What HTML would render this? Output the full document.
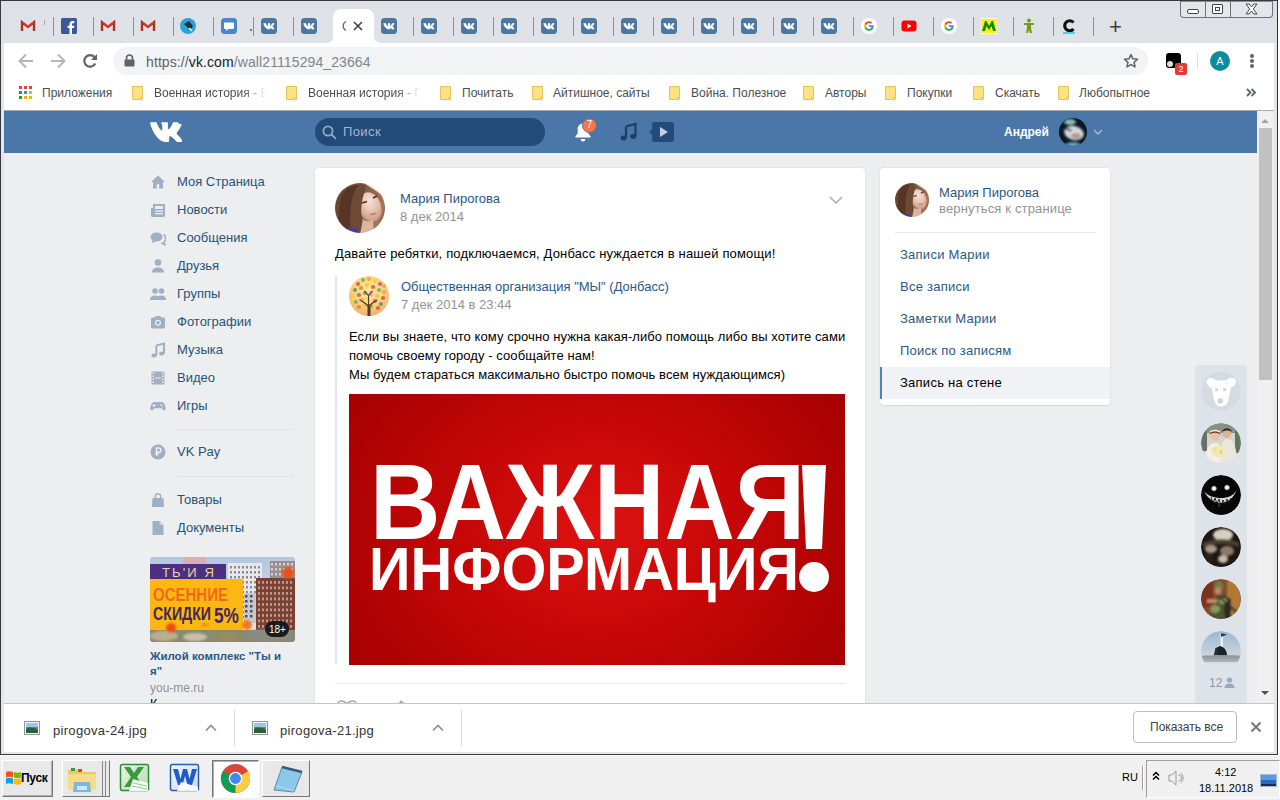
<!DOCTYPE html>
<html><head><meta charset="utf-8">
<style>
*{margin:0;padding:0;box-sizing:border-box}
html,body{width:1280px;height:800px;overflow:hidden;background:#fff;font-family:"Liberation Sans",sans-serif;-webkit-font-smoothing:antialiased}
.a{position:absolute}
#win{position:absolute;left:0;top:0;width:1278px;height:755px;background:#dee1e6;border:1px solid #333a40;border-right:1px solid #2e3338;}
.tsep{position:absolute;top:17px;width:1px;height:19px;background:#8d9196}
.fav{position:absolute;top:18px;width:16px;height:16px}
.vk{background:#4a76a8;border-radius:3px;color:#fff;font:bold 8px/16px "Liberation Sans",sans-serif;text-align:center;letter-spacing:-0.5px}
.bm{position:absolute;top:85px;font-size:12px;color:#4a4e53;line-height:16px}
.fold{position:absolute;top:86px;width:11px;height:14px;background:#fcd972;border:1px solid #e9c04f;border-radius:1px}
.menu .it{position:absolute;left:177px;font-size:13px;color:#285473;line-height:16px}
.menu .ic{position:absolute;left:150px;width:16px;height:16px}
.card{position:absolute;background:#fff;border-radius:4px;box-shadow:0 1px 0 0 #d7d8db,0 0 0 1px #e3e4e8}
.lnk{color:#2a5885}
.rm{position:absolute;left:900px;font-size:13px;color:#2a5885;line-height:16px;letter-spacing:0.25px}
.fr{position:absolute;left:1201px;width:40px;height:40px;border-radius:50%}
</style></head><body>
<div id="win"></div>
<!-- tab bar -->
<div class="a" style="left:1px;top:1px;width:1276px;height:42px;background:#dee1e6"></div>
<!-- window buttons -->
<div class="a" style="left:1180px;top:1px;width:93px;height:17px;border:1px solid #6d7278;border-top:1px solid #8a8e94;border-radius:0 0 4px 4px;background:#e3e6ea"></div>
<div class="a" style="left:1205px;top:1px;width:1px;height:16px;background:#6d7278"></div>
<div class="a" style="left:1230px;top:1px;width:1px;height:16px;background:#6d7278"></div>
<div class="a" style="left:1187px;top:9px;width:12px;height:5px;border:1px solid #444;border-radius:2px;background:#fff"></div>
<div class="a" style="left:1212px;top:4px;width:11px;height:10px;border:1px solid #444;border-radius:1px;background:#fff"><div class="a" style="left:2px;top:2px;width:5px;height:4px;border:1px solid #444"></div></div>
<svg class="a" style="left:1245px;top:3px" width="13" height="12" viewBox="0 0 13 12"><path d="M1 1h3.2l2.3 3 2.3-3H12L8.3 6 12 11H8.8L6.5 8 4.2 11H1l3.7-5z" fill="#fff" stroke="#444" stroke-width="1" stroke-linejoin="round"/></svg>
<div class="a" style="left:1274px;top:1px;width:3px;height:42px;background:#dee1e6"></div>
<!-- active tab -->
<svg class="a" style="left:325px;top:9px" width="57" height="34" viewBox="0 0 57 34"><path d="M0 34c5 0 8-2 8-7V8a8 8 0 0 1 8-8h25a8 8 0 0 1 8 8v19c0 5 3 7 8 7z" fill="#fff"/></svg>
<svg class="a" style="left:341px;top:21px" width="6" height="10" viewBox="0 0 6 10"><path d="M5 0.5A5 5 0 0 0 5 9.5" stroke="#5f6368" stroke-width="1.2" fill="none"/></svg>
<svg class="a" style="left:353px;top:21px" width="10" height="10" viewBox="0 0 10 10"><path d="M1 1l8 8M9 1l-8 8" stroke="#3c4043" stroke-width="1.6"/></svg>

<div class="tsep" style="left:53px"></div>
<div class="tsep" style="left:93px"></div>
<div class="tsep" style="left:133px"></div>
<div class="tsep" style="left:173px"></div>
<div class="tsep" style="left:213px"></div>
<div class="tsep" style="left:253px"></div>
<div class="tsep" style="left:293px"></div>
<div class="tsep" style="left:413px"></div>
<div class="tsep" style="left:453px"></div>
<div class="tsep" style="left:493px"></div>
<div class="tsep" style="left:533px"></div>
<div class="tsep" style="left:573px"></div>
<div class="tsep" style="left:613px"></div>
<div class="tsep" style="left:653px"></div>
<div class="tsep" style="left:693px"></div>
<div class="tsep" style="left:733px"></div>
<div class="tsep" style="left:773px"></div>
<div class="tsep" style="left:813px"></div>
<div class="tsep" style="left:853px"></div>
<div class="tsep" style="left:893px"></div>
<div class="tsep" style="left:933px"></div>
<div class="tsep" style="left:973px"></div>
<div class="tsep" style="left:1013px"></div>
<div class="tsep" style="left:1053px"></div>
<div class="tsep" style="left:1093px"></div>
<svg class="fav" style="left:20px" viewBox="0 0 16 16"><path d="M2 13V4.2L8 9l6-4.8V13" fill="none" stroke="#b23121" stroke-width="2.4" stroke-linejoin="miter"/><path d="M3 4.5L8 8.6l5-4.1" fill="none" stroke="#d44638" stroke-width="1.5"/></svg>
<svg class="fav" style="left:61px" viewBox="0 0 16 16"><rect width="16" height="16" rx="1.5" fill="#3b5998"/><path d="M11 16V10h2l.3-2.3H11V6.3c0-.7.2-1.1 1.1-1.1h1.2V3.1c-.2 0-1-.1-1.8-.1-1.8 0-3 1.1-3 3.1v1.6H6.6V10h1.9v6z" fill="#fff"/></svg>
<svg class="fav" style="left:100px" viewBox="0 0 16 16"><path d="M2 13V4.2L8 9l6-4.8V13" fill="none" stroke="#b23121" stroke-width="2.4" stroke-linejoin="miter"/><path d="M3 4.5L8 8.6l5-4.1" fill="none" stroke="#d44638" stroke-width="1.5"/></svg>
<svg class="fav" style="left:140px" viewBox="0 0 16 16"><path d="M2 13V4.2L8 9l6-4.8V13" fill="none" stroke="#b23121" stroke-width="2.4" stroke-linejoin="miter"/><path d="M3 4.5L8 8.6l5-4.1" fill="none" stroke="#d44638" stroke-width="1.5"/></svg>
<svg class="fav" style="left:180px" viewBox="0 0 16 16"><circle cx="8" cy="8" r="8" fill="#29a3d8"/><path d="M4 6l5-3 4 5-3 4z" fill="#17323f"/><path d="M9 10l3 3" stroke="#fff" stroke-width="1.5"/></svg>
<svg class="fav" style="left:221px" viewBox="0 0 16 16"><rect width="16" height="16" rx="3.5" fill="#4d86c6"/><path d="M4 4.5h8a1 1 0 0 1 1 1v4.5a1 1 0 0 1-1 1H7.5L5 13v-2H4a1 1 0 0 1-1-1V5.5a1 1 0 0 1 1-1z" fill="#fff"/></svg>
<svg class="fav" style="left:261px" viewBox="0 0 16 16"><rect width="16" height="16" rx="3.5" fill="#4d76a1"/><path d="M2.6 5.2h2c.2 0 .3.1.4.3.5 1.3 1.2 2.6 1.9 3V5.5c0-.2.1-.3.3-.3h1.6c.2 0 .3.1.3.3v2.4c.6-.1 1.5-1.3 1.9-2.4.1-.2.2-.3.4-.3h1.8c.3 0 .3.2.2.5-.4 1-1.5 2.2-1.9 2.6 0 .1 0 .2.1.3.6.6 1.5 1.5 1.9 2.3.1.3 0 .4-.3.4h-1.8c-.2 0-.3-.1-.5-.3-.4-.6-1-1.2-1.6-1.3v1.3c0 .2-.1.3-.3.3H8c-2.5-.2-4.6-2.4-5.6-5.4-.1-.3 0-.3.2-.3z" fill="#fff"/></svg>
<svg class="fav" style="left:301px" viewBox="0 0 16 16"><rect width="16" height="16" rx="3.5" fill="#4d76a1"/><path d="M2.6 5.2h2c.2 0 .3.1.4.3.5 1.3 1.2 2.6 1.9 3V5.5c0-.2.1-.3.3-.3h1.6c.2 0 .3.1.3.3v2.4c.6-.1 1.5-1.3 1.9-2.4.1-.2.2-.3.4-.3h1.8c.3 0 .3.2.2.5-.4 1-1.5 2.2-1.9 2.6 0 .1 0 .2.1.3.6.6 1.5 1.5 1.9 2.3.1.3 0 .4-.3.4h-1.8c-.2 0-.3-.1-.5-.3-.4-.6-1-1.2-1.6-1.3v1.3c0 .2-.1.3-.3.3H8c-2.5-.2-4.6-2.4-5.6-5.4-.1-.3 0-.3.2-.3z" fill="#fff"/></svg>
<svg class="fav" style="left:381px" viewBox="0 0 16 16"><rect width="16" height="16" rx="3.5" fill="#4d76a1"/><path d="M2.6 5.2h2c.2 0 .3.1.4.3.5 1.3 1.2 2.6 1.9 3V5.5c0-.2.1-.3.3-.3h1.6c.2 0 .3.1.3.3v2.4c.6-.1 1.5-1.3 1.9-2.4.1-.2.2-.3.4-.3h1.8c.3 0 .3.2.2.5-.4 1-1.5 2.2-1.9 2.6 0 .1 0 .2.1.3.6.6 1.5 1.5 1.9 2.3.1.3 0 .4-.3.4h-1.8c-.2 0-.3-.1-.5-.3-.4-.6-1-1.2-1.6-1.3v1.3c0 .2-.1.3-.3.3H8c-2.5-.2-4.6-2.4-5.6-5.4-.1-.3 0-.3.2-.3z" fill="#fff"/></svg>
<svg class="fav" style="left:421px" viewBox="0 0 16 16"><rect width="16" height="16" rx="3.5" fill="#4d76a1"/><path d="M2.6 5.2h2c.2 0 .3.1.4.3.5 1.3 1.2 2.6 1.9 3V5.5c0-.2.1-.3.3-.3h1.6c.2 0 .3.1.3.3v2.4c.6-.1 1.5-1.3 1.9-2.4.1-.2.2-.3.4-.3h1.8c.3 0 .3.2.2.5-.4 1-1.5 2.2-1.9 2.6 0 .1 0 .2.1.3.6.6 1.5 1.5 1.9 2.3.1.3 0 .4-.3.4h-1.8c-.2 0-.3-.1-.5-.3-.4-.6-1-1.2-1.6-1.3v1.3c0 .2-.1.3-.3.3H8c-2.5-.2-4.6-2.4-5.6-5.4-.1-.3 0-.3.2-.3z" fill="#fff"/></svg>
<svg class="fav" style="left:461px" viewBox="0 0 16 16"><rect width="16" height="16" rx="3.5" fill="#4d76a1"/><path d="M2.6 5.2h2c.2 0 .3.1.4.3.5 1.3 1.2 2.6 1.9 3V5.5c0-.2.1-.3.3-.3h1.6c.2 0 .3.1.3.3v2.4c.6-.1 1.5-1.3 1.9-2.4.1-.2.2-.3.4-.3h1.8c.3 0 .3.2.2.5-.4 1-1.5 2.2-1.9 2.6 0 .1 0 .2.1.3.6.6 1.5 1.5 1.9 2.3.1.3 0 .4-.3.4h-1.8c-.2 0-.3-.1-.5-.3-.4-.6-1-1.2-1.6-1.3v1.3c0 .2-.1.3-.3.3H8c-2.5-.2-4.6-2.4-5.6-5.4-.1-.3 0-.3.2-.3z" fill="#fff"/></svg>
<svg class="fav" style="left:501px" viewBox="0 0 16 16"><rect width="16" height="16" rx="3.5" fill="#4d76a1"/><path d="M2.6 5.2h2c.2 0 .3.1.4.3.5 1.3 1.2 2.6 1.9 3V5.5c0-.2.1-.3.3-.3h1.6c.2 0 .3.1.3.3v2.4c.6-.1 1.5-1.3 1.9-2.4.1-.2.2-.3.4-.3h1.8c.3 0 .3.2.2.5-.4 1-1.5 2.2-1.9 2.6 0 .1 0 .2.1.3.6.6 1.5 1.5 1.9 2.3.1.3 0 .4-.3.4h-1.8c-.2 0-.3-.1-.5-.3-.4-.6-1-1.2-1.6-1.3v1.3c0 .2-.1.3-.3.3H8c-2.5-.2-4.6-2.4-5.6-5.4-.1-.3 0-.3.2-.3z" fill="#fff"/></svg>
<svg class="fav" style="left:541px" viewBox="0 0 16 16"><rect width="16" height="16" rx="3.5" fill="#4d76a1"/><path d="M2.6 5.2h2c.2 0 .3.1.4.3.5 1.3 1.2 2.6 1.9 3V5.5c0-.2.1-.3.3-.3h1.6c.2 0 .3.1.3.3v2.4c.6-.1 1.5-1.3 1.9-2.4.1-.2.2-.3.4-.3h1.8c.3 0 .3.2.2.5-.4 1-1.5 2.2-1.9 2.6 0 .1 0 .2.1.3.6.6 1.5 1.5 1.9 2.3.1.3 0 .4-.3.4h-1.8c-.2 0-.3-.1-.5-.3-.4-.6-1-1.2-1.6-1.3v1.3c0 .2-.1.3-.3.3H8c-2.5-.2-4.6-2.4-5.6-5.4-.1-.3 0-.3.2-.3z" fill="#fff"/></svg>
<svg class="fav" style="left:581px" viewBox="0 0 16 16"><rect width="16" height="16" rx="3.5" fill="#4d76a1"/><path d="M2.6 5.2h2c.2 0 .3.1.4.3.5 1.3 1.2 2.6 1.9 3V5.5c0-.2.1-.3.3-.3h1.6c.2 0 .3.1.3.3v2.4c.6-.1 1.5-1.3 1.9-2.4.1-.2.2-.3.4-.3h1.8c.3 0 .3.2.2.5-.4 1-1.5 2.2-1.9 2.6 0 .1 0 .2.1.3.6.6 1.5 1.5 1.9 2.3.1.3 0 .4-.3.4h-1.8c-.2 0-.3-.1-.5-.3-.4-.6-1-1.2-1.6-1.3v1.3c0 .2-.1.3-.3.3H8c-2.5-.2-4.6-2.4-5.6-5.4-.1-.3 0-.3.2-.3z" fill="#fff"/></svg>
<svg class="fav" style="left:621px" viewBox="0 0 16 16"><rect width="16" height="16" rx="3.5" fill="#4d76a1"/><path d="M2.6 5.2h2c.2 0 .3.1.4.3.5 1.3 1.2 2.6 1.9 3V5.5c0-.2.1-.3.3-.3h1.6c.2 0 .3.1.3.3v2.4c.6-.1 1.5-1.3 1.9-2.4.1-.2.2-.3.4-.3h1.8c.3 0 .3.2.2.5-.4 1-1.5 2.2-1.9 2.6 0 .1 0 .2.1.3.6.6 1.5 1.5 1.9 2.3.1.3 0 .4-.3.4h-1.8c-.2 0-.3-.1-.5-.3-.4-.6-1-1.2-1.6-1.3v1.3c0 .2-.1.3-.3.3H8c-2.5-.2-4.6-2.4-5.6-5.4-.1-.3 0-.3.2-.3z" fill="#fff"/></svg>
<svg class="fav" style="left:661px" viewBox="0 0 16 16"><rect width="16" height="16" rx="3.5" fill="#4d76a1"/><path d="M2.6 5.2h2c.2 0 .3.1.4.3.5 1.3 1.2 2.6 1.9 3V5.5c0-.2.1-.3.3-.3h1.6c.2 0 .3.1.3.3v2.4c.6-.1 1.5-1.3 1.9-2.4.1-.2.2-.3.4-.3h1.8c.3 0 .3.2.2.5-.4 1-1.5 2.2-1.9 2.6 0 .1 0 .2.1.3.6.6 1.5 1.5 1.9 2.3.1.3 0 .4-.3.4h-1.8c-.2 0-.3-.1-.5-.3-.4-.6-1-1.2-1.6-1.3v1.3c0 .2-.1.3-.3.3H8c-2.5-.2-4.6-2.4-5.6-5.4-.1-.3 0-.3.2-.3z" fill="#fff"/></svg>
<svg class="fav" style="left:701px" viewBox="0 0 16 16"><rect width="16" height="16" rx="3.5" fill="#4d76a1"/><path d="M2.6 5.2h2c.2 0 .3.1.4.3.5 1.3 1.2 2.6 1.9 3V5.5c0-.2.1-.3.3-.3h1.6c.2 0 .3.1.3.3v2.4c.6-.1 1.5-1.3 1.9-2.4.1-.2.2-.3.4-.3h1.8c.3 0 .3.2.2.5-.4 1-1.5 2.2-1.9 2.6 0 .1 0 .2.1.3.6.6 1.5 1.5 1.9 2.3.1.3 0 .4-.3.4h-1.8c-.2 0-.3-.1-.5-.3-.4-.6-1-1.2-1.6-1.3v1.3c0 .2-.1.3-.3.3H8c-2.5-.2-4.6-2.4-5.6-5.4-.1-.3 0-.3.2-.3z" fill="#fff"/></svg>
<svg class="fav" style="left:741px" viewBox="0 0 16 16"><rect width="16" height="16" rx="3.5" fill="#4d76a1"/><path d="M2.6 5.2h2c.2 0 .3.1.4.3.5 1.3 1.2 2.6 1.9 3V5.5c0-.2.1-.3.3-.3h1.6c.2 0 .3.1.3.3v2.4c.6-.1 1.5-1.3 1.9-2.4.1-.2.2-.3.4-.3h1.8c.3 0 .3.2.2.5-.4 1-1.5 2.2-1.9 2.6 0 .1 0 .2.1.3.6.6 1.5 1.5 1.9 2.3.1.3 0 .4-.3.4h-1.8c-.2 0-.3-.1-.5-.3-.4-.6-1-1.2-1.6-1.3v1.3c0 .2-.1.3-.3.3H8c-2.5-.2-4.6-2.4-5.6-5.4-.1-.3 0-.3.2-.3z" fill="#fff"/></svg>
<svg class="fav" style="left:781px" viewBox="0 0 16 16"><rect width="16" height="16" rx="3.5" fill="#4d76a1"/><path d="M2.6 5.2h2c.2 0 .3.1.4.3.5 1.3 1.2 2.6 1.9 3V5.5c0-.2.1-.3.3-.3h1.6c.2 0 .3.1.3.3v2.4c.6-.1 1.5-1.3 1.9-2.4.1-.2.2-.3.4-.3h1.8c.3 0 .3.2.2.5-.4 1-1.5 2.2-1.9 2.6 0 .1 0 .2.1.3.6.6 1.5 1.5 1.9 2.3.1.3 0 .4-.3.4h-1.8c-.2 0-.3-.1-.5-.3-.4-.6-1-1.2-1.6-1.3v1.3c0 .2-.1.3-.3.3H8c-2.5-.2-4.6-2.4-5.6-5.4-.1-.3 0-.3.2-.3z" fill="#fff"/></svg>
<svg class="fav" style="left:821px" viewBox="0 0 16 16"><rect width="16" height="16" rx="3.5" fill="#4d76a1"/><path d="M2.6 5.2h2c.2 0 .3.1.4.3.5 1.3 1.2 2.6 1.9 3V5.5c0-.2.1-.3.3-.3h1.6c.2 0 .3.1.3.3v2.4c.6-.1 1.5-1.3 1.9-2.4.1-.2.2-.3.4-.3h1.8c.3 0 .3.2.2.5-.4 1-1.5 2.2-1.9 2.6 0 .1 0 .2.1.3.6.6 1.5 1.5 1.9 2.3.1.3 0 .4-.3.4h-1.8c-.2 0-.3-.1-.5-.3-.4-.6-1-1.2-1.6-1.3v1.3c0 .2-.1.3-.3.3H8c-2.5-.2-4.6-2.4-5.6-5.4-.1-.3 0-.3.2-.3z" fill="#fff"/></svg>
<svg class="fav" style="left:861px" viewBox="0 0 16 16"><circle cx="8" cy="8" r="8" fill="#fff"/><path d="M12.6 8.2c0-.4 0-.7-.1-1H8v1.9h2.6c-.1.6-.5 1.1-1 1.5v1.2h1.6c.9-.9 1.4-2.1 1.4-3.6z" fill="#4285f4"/><path d="M8 12.8c1.3 0 2.4-.4 3.2-1.2l-1.6-1.2c-.4.3-1 .5-1.6.5-1.2 0-2.3-.8-2.6-2H3.7v1.3c.8 1.6 2.5 2.6 4.3 2.6z" fill="#34a853"/><path d="M5.4 8.9c-.2-.6-.2-1.2 0-1.8V5.8H3.7c-.7 1.4-.7 3 0 4.4z" fill="#fbbc05"/><path d="M8 5.1c.7 0 1.3.2 1.8.7l1.4-1.4C10.3 3.6 9.2 3.2 8 3.2c-1.8 0-3.5 1-4.3 2.6l1.7 1.3c.3-1.2 1.4-2 2.6-2z" fill="#ea4335"/></svg>
<svg class="fav" style="left:901px" viewBox="0 0 16 16"><rect x="0.5" y="2.5" width="15" height="11" rx="3" fill="#f00"/><path d="M6.5 5.5v5l4-2.5z" fill="#fff"/></svg>
<svg class="fav" style="left:941px" viewBox="0 0 16 16"><circle cx="8" cy="8" r="8" fill="#fff"/><path d="M12.6 8.2c0-.4 0-.7-.1-1H8v1.9h2.6c-.1.6-.5 1.1-1 1.5v1.2h1.6c.9-.9 1.4-2.1 1.4-3.6z" fill="#4285f4"/><path d="M8 12.8c1.3 0 2.4-.4 3.2-1.2l-1.6-1.2c-.4.3-1 .5-1.6.5-1.2 0-2.3-.8-2.6-2H3.7v1.3c.8 1.6 2.5 2.6 4.3 2.6z" fill="#34a853"/><path d="M5.4 8.9c-.2-.6-.2-1.2 0-1.8V5.8H3.7c-.7 1.4-.7 3 0 4.4z" fill="#fbbc05"/><path d="M8 5.1c.7 0 1.3.2 1.8.7l1.4-1.4C10.3 3.6 9.2 3.2 8 3.2c-1.8 0-3.5 1-4.3 2.6l1.7 1.3c.3-1.2 1.4-2 2.6-2z" fill="#ea4335"/></svg>
<svg class="fav" style="left:981px" viewBox="0 0 16 16"><rect width="16" height="16" fill="#fff"/><rect x="0.5" y="1" width="15" height="14" fill="#fff200"/><path d="M1 13L4 3h1.5L8 8l2.5-5H12l3 10h-3l-1.5-5L8 12 5.5 8 4 13z" fill="#0a8a2e"/></svg>
<svg class="fav" style="left:1021px" viewBox="0 0 16 16"><circle cx="8" cy="2.5" r="2" fill="#7a9a1f"/><path d="M3 5h10v2H10v3l1 5H9l-1-3-1 3H5l1-5V7H3z" fill="#7a9a1f"/></svg>
<svg class="fav" style="left:1061px" viewBox="0 0 16 16"><path d="M12.5 4.5A5 5 0 1 0 12.5 11" fill="none" stroke="#111" stroke-width="3.2"/><rect x="2" y="14" width="12" height="2" fill="#4dd0e1"/></svg>
<div class="a" style="left:1109px;top:19px;font:300 22px/16px 'Liberation Sans';color:#3c4043">+</div>
<div class="a" style="left:44px;top:20px;width:1px;height:5px;background:#aaa"></div>
<div class="a" style="left:250px;top:29px;width:2px;height:2px;background:#777"></div>

<!-- toolbar -->
<div class="a" style="left:1px;top:43px;width:1276px;height:67px;background:#fff"></div>
<div class="a" style="left:113px;top:47px;width:1035px;height:28px;background:#f1f3f4;border-radius:14px"></div>
<svg class="a" style="left:17px;top:52px" width="18" height="18" viewBox="0 0 18 18"><path d="M16 9H3M9 2.5L2.5 9 9 15.5" stroke="#b5b5b5" stroke-width="2" fill="none"/></svg>
<svg class="a" style="left:49px;top:52px" width="18" height="18" viewBox="0 0 18 18"><path d="M2 9h13M9 2.5L15.5 9 9 15.5" stroke="#b5b5b5" stroke-width="2" fill="none"/></svg>
<svg class="a" style="left:81px;top:52px" width="18" height="18" viewBox="0 0 18 18"><path d="M14.3 11.5A5.8 5.8 0 1 1 13.5 5" stroke="#5f6368" stroke-width="2.2" fill="none"/><path d="M16 2v6h-6z" fill="#5f6368"/></svg>
<svg class="a" style="left:124px;top:54px" width="11" height="13" viewBox="0 0 11 13"><path d="M2.5 6V4a3 3 0 0 1 6 0v2" stroke="#5f6368" stroke-width="1.6" fill="none"/><rect x="0.5" y="5.5" width="10" height="7" rx="1" fill="#5f6368"/></svg>
<div class="a" style="left:146px;top:54px;font-size:14px;line-height:16px;color:#80868b;letter-spacing:0.1px"><span style="color:#5f6368">https://</span><span style="color:#202124">vk.com</span>/wall21115294_23664</div>
<svg class="a" style="left:1122px;top:52px" width="18" height="18" viewBox="0 0 24 24"><path d="M12 3.5l2.6 5.6 6.1.6-4.6 4.1 1.3 6L12 16.8 6.6 19.8l1.3-6L3.3 9.7l6.1-.6z" stroke="#5f6368" stroke-width="2" fill="none" stroke-linejoin="round"/></svg>
<div class="a" style="left:1166px;top:53px;width:15px;height:15px;background:#000;border-radius:3px"></div>
<div class="a" style="left:1167px;top:61px;width:6px;height:6px;background:#ddd;border-radius:50%"></div>
<div class="a" style="left:1175px;top:63px;width:12px;height:12px;background:#e53935;border-radius:2px;color:#fff;font:9px/12px 'Liberation Sans';text-align:center">2</div>
<div class="a" style="left:1197px;top:53px;width:1px;height:16px;background:#ddd"></div>
<div class="a" style="left:1210px;top:51px;width:20px;height:20px;background:#0f8b9b;border-radius:50%;color:#fff;font:11px/20px 'Liberation Sans';text-align:center">A</div>
<div class="a" style="left:1250px;top:54px;width:4px;height:4px;background:#5f6368;border-radius:50%"></div>
<div class="a" style="left:1250px;top:59px;width:4px;height:4px;background:#5f6368;border-radius:50%"></div>
<div class="a" style="left:1250px;top:64px;width:4px;height:4px;background:#5f6368;border-radius:50%"></div>

<!-- bookmarks -->
<div class="a" style="left:19px;top:86px;width:3px;height:3px;background:#db4437"></div><div class="a" style="left:24px;top:86px;width:3px;height:3px;background:#db4437"></div><div class="a" style="left:29px;top:86px;width:3px;height:3px;background:#db4437"></div><div class="a" style="left:19px;top:91px;width:3px;height:3px;background:#0f9d58"></div><div class="a" style="left:24px;top:91px;width:3px;height:3px;background:#4285f4"></div><div class="a" style="left:29px;top:91px;width:3px;height:3px;background:#f4b400"></div><div class="a" style="left:19px;top:96px;width:3px;height:3px;background:#0f9d58"></div><div class="a" style="left:24px;top:96px;width:3px;height:3px;background:#f4b400"></div><div class="a" style="left:29px;top:96px;width:3px;height:3px;background:#f4b400"></div>
<div class="bm" style="left:42px">Приложения</div>
<svg class="a" style="left:132px;top:86px" width="12" height="15" viewBox="0 0 12 15"><path d="M0.5 0.5h10v10.5c0 .8-.4 1.3-1 1.3s-1-.5-1-1.3v2.5h-8z" fill="#fde283" stroke="#e6c25a"/><path d="M8.5 13.5c.3.6.6.8 1 .8.6 0 1-.6 1-1.3V11" fill="none" stroke="#e6c25a"/></svg>
<div class="bm" style="left:154px;width:112px;white-space:nowrap;overflow:hidden;-webkit-mask-image:linear-gradient(90deg,#000 80%,transparent)">Военная история - В</div>
<svg class="a" style="left:286px;top:86px" width="12" height="15" viewBox="0 0 12 15"><path d="M0.5 0.5h10v10.5c0 .8-.4 1.3-1 1.3s-1-.5-1-1.3v2.5h-8z" fill="#fde283" stroke="#e6c25a"/><path d="M8.5 13.5c.3.6.6.8 1 .8.6 0 1-.6 1-1.3V11" fill="none" stroke="#e6c25a"/></svg>
<div class="bm" style="left:308px;width:112px;white-space:nowrap;overflow:hidden;-webkit-mask-image:linear-gradient(90deg,#000 80%,transparent)">Военная история - П</div>
<svg class="a" style="left:440px;top:86px" width="12" height="15" viewBox="0 0 12 15"><path d="M0.5 0.5h10v10.5c0 .8-.4 1.3-1 1.3s-1-.5-1-1.3v2.5h-8z" fill="#fde283" stroke="#e6c25a"/><path d="M8.5 13.5c.3.6.6.8 1 .8.6 0 1-.6 1-1.3V11" fill="none" stroke="#e6c25a"/></svg>
<div class="bm" style="left:462px">Почитать</div>
<svg class="a" style="left:532px;top:86px" width="12" height="15" viewBox="0 0 12 15"><path d="M0.5 0.5h10v10.5c0 .8-.4 1.3-1 1.3s-1-.5-1-1.3v2.5h-8z" fill="#fde283" stroke="#e6c25a"/><path d="M8.5 13.5c.3.6.6.8 1 .8.6 0 1-.6 1-1.3V11" fill="none" stroke="#e6c25a"/></svg>
<div class="bm" style="left:553px">Айтишное, сайты</div>
<svg class="a" style="left:669px;top:86px" width="12" height="15" viewBox="0 0 12 15"><path d="M0.5 0.5h10v10.5c0 .8-.4 1.3-1 1.3s-1-.5-1-1.3v2.5h-8z" fill="#fde283" stroke="#e6c25a"/><path d="M8.5 13.5c.3.6.6.8 1 .8.6 0 1-.6 1-1.3V11" fill="none" stroke="#e6c25a"/></svg>
<div class="bm" style="left:691px">Война. Полезное</div>
<svg class="a" style="left:803px;top:86px" width="12" height="15" viewBox="0 0 12 15"><path d="M0.5 0.5h10v10.5c0 .8-.4 1.3-1 1.3s-1-.5-1-1.3v2.5h-8z" fill="#fde283" stroke="#e6c25a"/><path d="M8.5 13.5c.3.6.6.8 1 .8.6 0 1-.6 1-1.3V11" fill="none" stroke="#e6c25a"/></svg>
<div class="bm" style="left:825px">Авторы</div>
<svg class="a" style="left:885px;top:86px" width="12" height="15" viewBox="0 0 12 15"><path d="M0.5 0.5h10v10.5c0 .8-.4 1.3-1 1.3s-1-.5-1-1.3v2.5h-8z" fill="#fde283" stroke="#e6c25a"/><path d="M8.5 13.5c.3.6.6.8 1 .8.6 0 1-.6 1-1.3V11" fill="none" stroke="#e6c25a"/></svg>
<div class="bm" style="left:907px">Покупки</div>
<svg class="a" style="left:973px;top:86px" width="12" height="15" viewBox="0 0 12 15"><path d="M0.5 0.5h10v10.5c0 .8-.4 1.3-1 1.3s-1-.5-1-1.3v2.5h-8z" fill="#fde283" stroke="#e6c25a"/><path d="M8.5 13.5c.3.6.6.8 1 .8.6 0 1-.6 1-1.3V11" fill="none" stroke="#e6c25a"/></svg>
<div class="bm" style="left:995px">Скачать</div>
<svg class="a" style="left:1058px;top:86px" width="12" height="15" viewBox="0 0 12 15"><path d="M0.5 0.5h10v10.5c0 .8-.4 1.3-1 1.3s-1-.5-1-1.3v2.5h-8z" fill="#fde283" stroke="#e6c25a"/><path d="M8.5 13.5c.3.6.6.8 1 .8.6 0 1-.6 1-1.3V11" fill="none" stroke="#e6c25a"/></svg>
<div class="bm" style="left:1079px">Любопытное</div>
<svg class="a" style="left:1246px;top:88px" width="10" height="9" viewBox="0 0 10 9"><path d="M1 1l3.5 3.5L1 8M5.5 1L9 4.5 5.5 8" stroke="#5f6368" stroke-width="1.8" fill="none"/></svg>
<div class="a" style="left:1px;top:110px;width:1276px;height:1px;background:#a7a9ac"></div>

<!-- page -->
<div class="a" style="left:4px;top:111px;width:1253px;height:592px;background:#edeef0;overflow:hidden" id="page"></div>

<!-- scrollbar -->
<div class="a" style="left:1257px;top:111px;width:17px;height:592px;background:#f0f0f0"></div>
<div class="a" style="left:1259px;top:128px;width:13px;height:252px;background:#c1c1c1"></div>
<div class="a" style="left:1261px;top:119px;width:0;height:0;border-left:4px solid transparent;border-right:4px solid transparent;border-bottom:4px solid #a3a3a3"></div>
<div class="a" style="left:1261px;top:691px;width:0;height:0;border-left:4px solid transparent;border-right:4px solid transparent;border-top:4px solid #505050"></div>


<!-- vk header -->
<div class="a" style="left:4px;top:111px;width:1253px;height:42px;background:#4a76a8"></div>
<svg class="a" style="left:148px;top:121.5px" width="35" height="20" viewBox="0 0 35 20"><path d="M31.3 1.3c.2-.7 0-1.3-1-1.3h-3.4c-.9 0-1.2.4-1.5 1 0 0-1.3 3.4-3.2 5.5-.6.6-.9.8-1.2.8-.2 0-.5-.2-.5-.8V1.1c0-.7-.2-1.1-.8-1.1h-5.3c-.5 0-.8.4-.8.7 0 .7 1 .8 1.1 2.7v4c0 .9-.2 1-.5 1-1.2 0-4-4.3-5.7-9.1C8.1.4 7.8 0 6.9 0H3.5C2.5 0 2.3.4 2.3 1c0 1 1.2 6 5.7 12.6 3 4.5 7.3 6.9 11.2 6.9 2.3 0 2.6-.5 2.6-1.4v-3.4c0-1.1.2-1.3 1-1.3.5 0 1.5.3 3.6 2.4 2.4 2.4 2.8 3.5 4.2 3.5h3.4c1 0 1.5-.5 1.2-1.5-.3-1-1.4-2.4-2.9-4.1-.8-.9-2-2-2.4-2.5-.5-.7-.4-1 0-1.6 0 0 4.4-6.2 4.9-8.3z" fill="#fff" transform="translate(0 0.3) scale(0.97 0.97)"/></svg>
<div class="a" style="left:315px;top:118px;width:230px;height:28px;background:#224b7a;border-radius:14px"></div>
<svg class="a" style="left:322px;top:125px" width="15" height="15" viewBox="0 0 15 15"><circle cx="6" cy="6" r="4.6" stroke="#94a9c4" stroke-width="1.8" fill="none"/><path d="M9.4 9.4l4 4" stroke="#94a9c4" stroke-width="1.8" stroke-linecap="round"/></svg>
<div class="a" style="left:343px;top:124px;font-size:13px;line-height:16px;color:#a2b8d2;letter-spacing:0.4px">Поиск</div>
<svg class="a" style="left:574px;top:122px" width="18" height="20" viewBox="0 0 18 20"><path d="M9 1.5c-3.2 0-5.3 2.4-5.3 5.6v4.3L1.5 14.3c-.4.5-.2 1.2.5 1.2h14c.7 0 .9-.7.5-1.2l-2.2-2.9V7.1c0-3.2-2.1-5.6-5.3-5.6z" fill="#fff"/><path d="M6.5 17h5a2.5 2.5 0 0 1-5 0z" fill="#fff"/></svg>
<div class="a" style="left:582px;top:118px;width:15px;height:15px;background:#ff7345;border:1.5px solid #4a76a8;border-radius:50%;color:#fff;font:10px/12px 'Liberation Sans';text-align:center">7</div>
<svg class="a" style="left:620px;top:122px" width="17" height="20" viewBox="0 0 17 20"><path d="M6 4.5L15.5 2v12.5" stroke="#1d3f68" stroke-width="2.2" fill="none"/><path d="M6 4.5v11" stroke="#1d3f68" stroke-width="2.2"/><ellipse cx="3.6" cy="16" rx="3" ry="2.4" fill="#1d3f68"/><ellipse cx="13.2" cy="14.5" rx="3" ry="2.4" fill="#1d3f68"/></svg>
<div class="a" style="left:652px;top:122px;width:22px;height:20px;background:#224b7a;border-radius:3px"></div>
<div class="a" style="left:649px;top:129px;width:0;height:0;border-top:3px solid transparent;border-bottom:3px solid transparent;border-right:3px solid #224b7a"></div>
<div class="a" style="left:660px;top:127px;width:0;height:0;border-top:5px solid transparent;border-bottom:5px solid transparent;border-left:8px solid #c3d0e2"></div>
<div class="a" style="left:1004px;top:124px;font:bold 12px/16px 'Liberation Sans';color:#fff">Андрей</div>
<svg class="a" style="left:1059px;top:118px" width="28" height="28" viewBox="0 0 28 28"><defs><clipPath id="ca"><circle cx="14" cy="14" r="14"/></clipPath><filter id="ba"><feGaussianBlur stdDeviation="0.8"/></filter></defs><g clip-path="url(#ca)"><rect width="28" height="28" fill="#0c1824"/><g filter="url(#ba)"><ellipse cx="15" cy="15" rx="10" ry="7" transform="rotate(15 15 15)" fill="#d6d8d8"/><ellipse cx="17" cy="18" rx="5" ry="3" fill="#b09890"/><ellipse cx="11" cy="4" rx="6" ry="3" fill="#8ab8b8"/><path d="M4 12c3-2 6-1 8 1" stroke="#1a2a36" stroke-width="2" fill="none"/><ellipse cx="14" cy="27" rx="8" ry="3" fill="#5aa0b0"/></g></g></svg>
<svg class="a" style="left:1093px;top:129px" width="10" height="6" viewBox="0 0 10 6"><path d="M1 1l4 4 4-4" stroke="#a9bcd3" stroke-width="1.4" fill="none"/></svg>

<div class="menu">
<svg class="ic" style="top:174px" viewBox="0 0 16 16"><path d="M8 1.5L1 8h2v6.5h3.8v-4.2h2.4v4.2H13V8h2z" fill="#a0b0c4"/></svg>
<div class="it" style="top:174px">Моя Страница</div>
<svg class="ic" style="top:202px" viewBox="0 0 16 16"><path d="M3 2h12v11.5a1.5 1.5 0 0 1-1.5 1.5h-11A1.5 1.5 0 0 1 1 13.5V6h2z" fill="#a0b0c4"/><rect x="5" y="4" width="8" height="3" fill="#edeef0"/><rect x="5" y="8.5" width="8" height="1.3" fill="#edeef0"/><rect x="5" y="11" width="8" height="1.3" fill="#edeef0"/></svg>
<div class="it" style="top:202px">Новости</div>
<svg class="ic" style="top:230px" viewBox="0 0 16 16"><ellipse cx="6.5" cy="7" rx="6" ry="4.6" fill="#a0b0c4"/><path d="M2.5 10.5L2 13.5l4-2.5z" fill="#a0b0c4"/><path d="M13.5 4.5a4.6 4.6 0 0 1 .5 7.5l.8 2.5-3.5-1.6" fill="none" stroke="#a0b0c4" stroke-width="1.6"/></svg>
<div class="it" style="top:230px">Сообщения</div>
<svg class="ic" style="top:258px" viewBox="0 0 16 16"><circle cx="8" cy="4.5" r="3.3" fill="#a0b0c4"/><path d="M2 14.5c0-3.3 2.6-5 6-5s6 1.7 6 5z" fill="#a0b0c4"/></svg>
<div class="it" style="top:258px">Друзья</div>
<svg class="ic" style="top:286px" viewBox="0 0 16 16"><circle cx="5" cy="5" r="2.8" fill="#a0b0c4"/><circle cx="11.5" cy="5" r="2.8" fill="#a0b0c4"/><path d="M0 14c0-3 2-4.5 5-4.5s5 1.5 5 4.5z" fill="#a0b0c4"/><path d="M6.5 14c0-3 2-4.5 5-4.5s4.5 1.5 4.5 4.5z" fill="#a0b0c4"/></svg>
<div class="it" style="top:286px">Группы</div>
<svg class="ic" style="top:314px" viewBox="0 0 16 16"><path d="M1 5a1.5 1.5 0 0 1 1.5-1.5h2L6 2h4l1.5 1.5h2A1.5 1.5 0 0 1 15 5v8a1.5 1.5 0 0 1-1.5 1.5h-11A1.5 1.5 0 0 1 1 13z" fill="#a0b0c4"/><circle cx="8" cy="8.7" r="3" fill="#edeef0"/><circle cx="8" cy="8.7" r="1.8" fill="#a0b0c4"/></svg>
<div class="it" style="top:314px">Фотографии</div>
<svg class="ic" style="top:342px" viewBox="0 0 16 16"><path d="M6.3 3.5L14 1.5v10" stroke="#a0b0c4" stroke-width="2" fill="none"/><path d="M6.3 3.5v10" stroke="#a0b0c4" stroke-width="2"/><ellipse cx="4" cy="13.5" rx="2.6" ry="2" fill="#a0b0c4"/><ellipse cx="11.7" cy="11.5" rx="2.6" ry="2" fill="#a0b0c4"/></svg>
<div class="it" style="top:342px">Музыка</div>
<svg class="ic" style="top:370px" viewBox="0 0 16 16"><rect x="1.5" y="1.5" width="13" height="13" fill="#a0b0c4"/><rect x="5" y="1.5" width="6" height="13" fill="#edeef0" opacity="0"/><g fill="#edeef0"><rect x="2.5" y="2.5" width="1.5" height="1.5"/><rect x="2.5" y="5.5" width="1.5" height="1.5"/><rect x="2.5" y="8.5" width="1.5" height="1.5"/><rect x="2.5" y="11.5" width="1.5" height="1.5"/><rect x="12" y="2.5" width="1.5" height="1.5"/><rect x="12" y="5.5" width="1.5" height="1.5"/><rect x="12" y="8.5" width="1.5" height="1.5"/><rect x="12" y="11.5" width="1.5" height="1.5"/><rect x="5" y="7.5" width="6" height="1"/></g></svg>
<div class="it" style="top:370px">Видео</div>
<svg class="ic" style="top:398px" viewBox="0 0 16 16"><path d="M4.5 4h7c2.2 0 3.5 2 4 5 .4 2.5-.3 3.5-1.3 3.5-1 0-2-1.5-2.7-2.2H4.5c-.7.7-1.7 2.2-2.7 2.2S.1 11.5.5 9c.5-3 1.8-5 4-5z" fill="#a0b0c4"/><path d="M4 6v3M2.5 7.5h3" stroke="#edeef0" stroke-width="1.1"/><circle cx="11" cy="6.8" r=".8" fill="#edeef0"/><circle cx="12.3" cy="8.3" r=".8" fill="#edeef0"/></svg>
<div class="it" style="top:398px">Игры</div>
<svg class="ic" style="top:444px" viewBox="0 0 16 16"><circle cx="8" cy="8" r="7.5" fill="#a0b0c4"/><path d="M6.5 12V4h2.3a2 2 0 0 1 0 4.3H5.5M5.5 10h3.5" stroke="#edeef0" stroke-width="1.4" fill="none"/></svg>
<div class="it" style="top:444px">VK Pay</div>
<svg class="ic" style="top:492px" viewBox="0 0 16 16"><path d="M2.5 6h11l.5 9H2z" fill="#a0b0c4"/><path d="M5.3 6V4.5a2.7 2.7 0 0 1 5.4 0V6" stroke="#a0b0c4" stroke-width="1.4" fill="none"/></svg>
<div class="it" style="top:492px">Товары</div>
<svg class="ic" style="top:520px" viewBox="0 0 16 16"><path d="M2.5 1h7l4 4v10h-11z" fill="#a0b0c4"/><path d="M9.5 1v4h4" fill="#edeef0" opacity=".55"/></svg>
<div class="it" style="top:520px">Документы</div>
<div class="a" style="left:177px;top:429px;width:116px;height:1px;background:#dfe2e8"></div>
<div class="a" style="left:177px;top:476px;width:116px;height:1px;background:#dfe2e8"></div>
</div>
<!-- MAIN card -->
<div class="card" style="left:315px;top:168px;width:550px;height:560px"></div>
<svg class="a" style="left:335px;top:183px" width="50" height="50" viewBox="0 0 50 50"><defs><clipPath id="cm"><circle cx="25" cy="25" r="25"/></clipPath><filter id="bm" x="-10%" y="-10%" width="120%" height="120%"><feGaussianBlur stdDeviation="0.7"/></filter><linearGradient id="hm" x1="0" y1="0" x2="1" y2="0.3"><stop offset="0" stop-color="#5a3a2a"/><stop offset="0.5" stop-color="#7e5640"/><stop offset="1" stop-color="#a6785a"/></linearGradient><radialGradient id="fm" cx="0.55" cy="0.3" r="0.7"><stop offset="0" stop-color="#f6e2da"/><stop offset="0.5" stop-color="#e8c4b4"/><stop offset="1" stop-color="#c89882"/></radialGradient></defs><g clip-path="url(#cm)"><g filter="url(#bm)"><rect x="-2" y="-2" width="54" height="54" fill="url(#hm)"/><path d="M26 -2h28v20L44 10z" fill="#efe2da"/><ellipse cx="35" cy="24" rx="11" ry="15" transform="rotate(-18 35 24)" fill="url(#fm)"/><path d="M22 2c6-2 10 0 8 6-4 10-5 22-2 34l-4 10H14C10 36 12 14 22 2z" fill="#6e4a34"/><path d="M5 20C6 8 14 2 24 2 16 10 14 26 16 52H2z" fill="#563626"/><path d="M28 36c3 3 7 3 10 0l1 16H25z" fill="#dcb4a0"/><path d="M50 16c0 12-4 22-10 30l-3 6h15V12z" fill="#8e6248"/><path d="M14 44l8 2 2 6H10z" fill="#4a3a9a"/><path d="M27 20l5-1.5M38 15l4-2" stroke="#4a3028" stroke-width="1.6"/><path d="M35 31q3 1 6-1" stroke="#c48080" stroke-width="1.8" fill="none"/></g></g></svg>
<div class="a lnk" style="left:400px;top:191px;font-size:13px;line-height:16px;font-weight:500;color:#2a5885">Мария Пирогова</div>
<div class="a" style="left:400px;top:209px;font-size:13px;line-height:16px;color:#939393">8 дек 2014</div>
<svg class="a" style="left:829px;top:196px" width="14" height="8" viewBox="0 0 14 8"><path d="M1 1l6 6 6-6" stroke="#a9b3c0" stroke-width="1.6" fill="none"/></svg>
<div class="a" style="left:335px;top:244px;font-size:13px;line-height:19px;color:#000;letter-spacing:0.15px">Давайте ребятки, подключаемся, Донбасс нуждается в нашей помощи!</div>
<div class="a" style="left:335px;top:276px;width:2px;height:388px;background:#dfe6ed"></div>
<svg class="a" style="left:349px;top:276px" width="40" height="40" viewBox="0 0 40 40"><defs><clipPath id="co"><circle cx="20" cy="20" r="20"/></clipPath><radialGradient id="go" cx="0.5" cy="0.35" r="0.65"><stop offset="0" stop-color="#fde890"/><stop offset="0.55" stop-color="#f9d48a"/><stop offset="1" stop-color="#f2b070"/></radialGradient><filter id="bo"><feGaussianBlur stdDeviation="0.35"/></filter></defs><g clip-path="url(#co)" filter="url(#bo)"><rect width="40" height="40" fill="url(#go)"/><g opacity="0.85"><circle cx="9" cy="8" r="2.1" fill="#e0503a"/><circle cx="14" cy="4" r="2.1" fill="#7cb342"/><circle cx="20" cy="3" r="2.1" fill="#f2a33a"/><circle cx="26" cy="5" r="2.1" fill="#f6d030"/><circle cx="31" cy="8" r="2.1" fill="#c8507a"/><circle cx="6" cy="14" r="2.1" fill="#5a9a4a"/><circle cx="12" cy="12" r="2.1" fill="#e88030"/><circle cx="18" cy="9" r="2.1" fill="#f0c040"/><circle cx="24" cy="11" r="2.1" fill="#e0503a"/><circle cx="30" cy="14" r="2.1" fill="#7cb342"/><circle cx="35" cy="16" r="2.1" fill="#f2a33a"/><circle cx="4" cy="20" r="2.1" fill="#f6d030"/><circle cx="10" cy="19" r="2.1" fill="#c8507a"/><circle cx="16" cy="17" r="2.1" fill="#5a9a4a"/><circle cx="22" cy="17" r="2.1" fill="#e88030"/><circle cx="28" cy="20" r="2.1" fill="#f0c040"/><circle cx="34" cy="22" r="2.1" fill="#e0503a"/><circle cx="7" cy="26" r="2.1" fill="#7cb342"/><circle cx="13" cy="24" r="2.1" fill="#f2a33a"/><circle cx="19" cy="23" r="2.1" fill="#f6d030"/><circle cx="26" cy="25" r="2.1" fill="#c8507a"/><circle cx="32" cy="28" r="2.1" fill="#5a9a4a"/><circle cx="10" cy="31" r="2.1" fill="#e88030"/><circle cx="16" cy="29" r="2.1" fill="#f0c040"/><circle cx="29" cy="32" r="2.1" fill="#e0503a"/><circle cx="22" cy="30" r="2.1" fill="#7cb342"/><circle cx="35" cy="10" r="2.1" fill="#f2a33a"/><circle cx="3" cy="27" r="2.1" fill="#f6d030"/></g><circle cx="22" cy="18" r="2.6" fill="#e8a8d0"/><path d="M19 40V31c-2-3-6-5-9-7l.6-.8c3 1.5 6 3.5 8.4 5.5V20l-4-5 .8-.6 3.7 4.4 3.7-4.4.8.6-4 5v9c2.5-2 5-4 8-5.5l.6.8c-3 2-6.5 4-8.6 7V40z" fill="#5d3a1a"/><rect x="18.5" y="30" width="3" height="10" fill="#5d3a1a"/></g></svg>
<div class="a lnk" style="left:401px;top:279px;font-size:13px;line-height:16px">Общественная организация "МЫ" (Донбасс)</div>
<div class="a" style="left:401px;top:297px;font-size:13px;line-height:16px;color:#939393">7 дек 2014 в 23:44</div>
<div class="a" style="left:349px;top:327px;width:500px;font-size:13px;line-height:19px;color:#000;letter-spacing:0.07px;white-space:nowrap">Если вы знаете, что кому срочно нужна какая-либо помощь либо вы хотите сами<br>помочь своему городу - сообщайте нам!<br>Мы будем стараться максимально быстро помочь всем нуждающимся)</div>
<svg class="a" style="left:349px;top:394px" width="496" height="271" viewBox="0 0 496 271"><defs><radialGradient id="rg" cx="0.5" cy="0.5" r="0.62" gradientTransform="translate(0.5 0.5) scale(1 1.5) translate(-0.5 -0.5)"><stop offset="0" stop-color="#de1212"/><stop offset="0.45" stop-color="#c50707"/><stop offset="1" stop-color="#a40000"/></radialGradient></defs><rect width="496" height="271" fill="url(#rg)"/>
<text x="21" y="144.5" font-family="Liberation Sans" font-weight="bold" font-size="107" fill="#fff" textLength="435" lengthAdjust="spacingAndGlyphs">ВАЖНАЯ</text>
<text x="20" y="195.5" font-family="Liberation Sans" font-weight="bold" font-size="61" fill="#fff" textLength="430" lengthAdjust="spacingAndGlyphs">ИНФОРМАЦИЯ</text>
<path d="M453 71h24l-4 84h-16z" fill="#fff"/><circle cx="465" cy="183" r="15" fill="#fff"/></svg>
<div class="a" style="left:335px;top:683px;width:510px;height:1px;background:#e7e8ec"></div>
<svg class="a" style="left:336px;top:699px" width="22" height="8" viewBox="0 0 22 8"><path d="M11 5C8 1 2 1 2 5M11 5c3-4 9-4 9 0" stroke="#a8acb2" stroke-width="1.5" fill="none"/></svg>
<svg class="a" style="left:397px;top:699px" width="10" height="6" viewBox="0 0 10 6"><path d="M1 5l3-4 4 4" fill="#a8acb2"/></svg>

<!-- RIGHT card -->
<div class="card" style="left:880px;top:168px;width:230px;height:237px"></div>
<svg class="a" style="left:895px;top:183px" width="34" height="34" viewBox="0 0 50 50"><defs><clipPath id="cr"><circle cx="25" cy="25" r="25"/></clipPath><filter id="br" x="-10%" y="-10%" width="120%" height="120%"><feGaussianBlur stdDeviation="0.7"/></filter><linearGradient id="hr" x1="0" y1="0" x2="1" y2="0.3"><stop offset="0" stop-color="#5a3a2a"/><stop offset="0.5" stop-color="#7e5640"/><stop offset="1" stop-color="#a6785a"/></linearGradient><radialGradient id="fr" cx="0.55" cy="0.3" r="0.7"><stop offset="0" stop-color="#f6e2da"/><stop offset="0.5" stop-color="#e8c4b4"/><stop offset="1" stop-color="#c89882"/></radialGradient></defs><g clip-path="url(#cr)"><g filter="url(#br)"><rect x="-2" y="-2" width="54" height="54" fill="url(#hr)"/><path d="M26 -2h28v20L44 10z" fill="#efe2da"/><ellipse cx="35" cy="24" rx="11" ry="15" transform="rotate(-18 35 24)" fill="url(#fr)"/><path d="M22 2c6-2 10 0 8 6-4 10-5 22-2 34l-4 10H14C10 36 12 14 22 2z" fill="#6e4a34"/><path d="M5 20C6 8 14 2 24 2 16 10 14 26 16 52H2z" fill="#563626"/><path d="M28 36c3 3 7 3 10 0l1 16H25z" fill="#dcb4a0"/><path d="M50 16c0 12-4 22-10 30l-3 6h15V12z" fill="#8e6248"/><path d="M14 44l8 2 2 6H10z" fill="#4a3a9a"/><path d="M27 20l5-1.5M38 15l4-2" stroke="#4a3028" stroke-width="1.6"/><path d="M35 31q3 1 6-1" stroke="#c48080" stroke-width="1.8" fill="none"/></g></g></svg>
<div class="a lnk" style="left:939px;top:185px;font-size:13px;line-height:16px">Мария Пирогова</div>
<div class="a" style="left:939px;top:201px;letter-spacing:0.15px;font-size:13px;line-height:16px;color:#939393">вернуться к странице</div>
<div class="a" style="left:895px;top:232px;width:200px;height:1px;background:#e7e8ec"></div>
<div class="rm" style="top:247px">Записи Марии</div>
<div class="rm" style="top:279px">Все записи</div>
<div class="rm" style="top:311px">Заметки Марии</div>
<div class="rm" style="top:343px">Поиск по записям</div>
<div class="a" style="left:880px;top:367px;width:230px;height:32px;background:#f0f2f5"></div>
<div class="a" style="left:880px;top:367px;width:2px;height:32px;background:#5181b8"></div>
<div class="rm" style="top:375px;color:#000">Запись на стене</div>

<!-- AD -->
<svg class="a" style="left:150px;top:557px" width="145" height="85" viewBox="0 0 145 85"><defs><linearGradient id="sky" x1="0" y1="0" x2="0" y2="1"><stop offset="0" stop-color="#b4c6e2"/><stop offset="1" stop-color="#e6e8ee"/></linearGradient><clipPath id="adc"><rect width="145" height="85" rx="3"/></clipPath><filter id="adb"><feGaussianBlur stdDeviation="1.2"/></filter><filter id="adb2"><feGaussianBlur stdDeviation="0.45"/></filter></defs><g clip-path="url(#adc)">
<rect width="145" height="85" fill="url(#sky)"/>
<g filter="url(#adb2)">
<rect x="33" y="0" width="23" height="8" fill="#d8b0b0"/>
<rect x="78" y="6" width="34" height="60" fill="#e8e8ec"/><rect x="80" y="9" width="2" height="2.5" fill="#8a8a96"/><rect x="80" y="14" width="2" height="2.5" fill="#8a8a96"/><rect x="80" y="19" width="2" height="2.5" fill="#8a8a96"/><rect x="80" y="24" width="2" height="2.5" fill="#8a8a96"/><rect x="80" y="29" width="2" height="2.5" fill="#8a8a96"/><rect x="80" y="34" width="2" height="2.5" fill="#8a8a96"/><rect x="80" y="39" width="2" height="2.5" fill="#8a8a96"/><rect x="80" y="44" width="2" height="2.5" fill="#8a8a96"/><rect x="80" y="49" width="2" height="2.5" fill="#8a8a96"/><rect x="80" y="54" width="2" height="2.5" fill="#8a8a96"/><rect x="80" y="59" width="2" height="2.5" fill="#8a8a96"/><rect x="84" y="9" width="2" height="2.5" fill="#8a8a96"/><rect x="84" y="14" width="2" height="2.5" fill="#8a8a96"/><rect x="84" y="19" width="2" height="2.5" fill="#8a8a96"/><rect x="84" y="24" width="2" height="2.5" fill="#8a8a96"/><rect x="84" y="29" width="2" height="2.5" fill="#8a8a96"/><rect x="84" y="34" width="2" height="2.5" fill="#8a8a96"/><rect x="84" y="39" width="2" height="2.5" fill="#8a8a96"/><rect x="84" y="44" width="2" height="2.5" fill="#8a8a96"/><rect x="84" y="49" width="2" height="2.5" fill="#8a8a96"/><rect x="84" y="54" width="2" height="2.5" fill="#8a8a96"/><rect x="84" y="59" width="2" height="2.5" fill="#8a8a96"/><rect x="88" y="9" width="2" height="2.5" fill="#8a8a96"/><rect x="88" y="14" width="2" height="2.5" fill="#8a8a96"/><rect x="88" y="19" width="2" height="2.5" fill="#8a8a96"/><rect x="88" y="24" width="2" height="2.5" fill="#8a8a96"/><rect x="88" y="29" width="2" height="2.5" fill="#8a8a96"/><rect x="88" y="34" width="2" height="2.5" fill="#8a8a96"/><rect x="88" y="39" width="2" height="2.5" fill="#8a8a96"/><rect x="88" y="44" width="2" height="2.5" fill="#8a8a96"/><rect x="88" y="49" width="2" height="2.5" fill="#8a8a96"/><rect x="88" y="54" width="2" height="2.5" fill="#8a8a96"/><rect x="88" y="59" width="2" height="2.5" fill="#8a8a96"/><rect x="92" y="9" width="2" height="2.5" fill="#8a8a96"/><rect x="92" y="14" width="2" height="2.5" fill="#8a8a96"/><rect x="92" y="19" width="2" height="2.5" fill="#8a8a96"/><rect x="92" y="24" width="2" height="2.5" fill="#8a8a96"/><rect x="92" y="29" width="2" height="2.5" fill="#8a8a96"/><rect x="92" y="34" width="2" height="2.5" fill="#8a8a96"/><rect x="92" y="39" width="2" height="2.5" fill="#8a8a96"/><rect x="92" y="44" width="2" height="2.5" fill="#8a8a96"/><rect x="92" y="49" width="2" height="2.5" fill="#8a8a96"/><rect x="92" y="54" width="2" height="2.5" fill="#8a8a96"/><rect x="92" y="59" width="2" height="2.5" fill="#8a8a96"/><rect x="96" y="9" width="2" height="2.5" fill="#8a8a96"/><rect x="96" y="14" width="2" height="2.5" fill="#8a8a96"/><rect x="96" y="19" width="2" height="2.5" fill="#8a8a96"/><rect x="96" y="24" width="2" height="2.5" fill="#8a8a96"/><rect x="96" y="29" width="2" height="2.5" fill="#8a8a96"/><rect x="96" y="34" width="2" height="2.5" fill="#8a8a96"/><rect x="96" y="39" width="2" height="2.5" fill="#8a8a96"/><rect x="96" y="44" width="2" height="2.5" fill="#8a8a96"/><rect x="96" y="49" width="2" height="2.5" fill="#8a8a96"/><rect x="96" y="54" width="2" height="2.5" fill="#8a8a96"/><rect x="96" y="59" width="2" height="2.5" fill="#8a8a96"/><rect x="100" y="9" width="2" height="2.5" fill="#8a8a96"/><rect x="100" y="14" width="2" height="2.5" fill="#8a8a96"/><rect x="100" y="19" width="2" height="2.5" fill="#8a8a96"/><rect x="100" y="24" width="2" height="2.5" fill="#8a8a96"/><rect x="100" y="29" width="2" height="2.5" fill="#8a8a96"/><rect x="100" y="34" width="2" height="2.5" fill="#8a8a96"/><rect x="100" y="39" width="2" height="2.5" fill="#8a8a96"/><rect x="100" y="44" width="2" height="2.5" fill="#8a8a96"/><rect x="100" y="49" width="2" height="2.5" fill="#8a8a96"/><rect x="100" y="54" width="2" height="2.5" fill="#8a8a96"/><rect x="100" y="59" width="2" height="2.5" fill="#8a8a96"/><rect x="104" y="9" width="2" height="2.5" fill="#8a8a96"/><rect x="104" y="14" width="2" height="2.5" fill="#8a8a96"/><rect x="104" y="19" width="2" height="2.5" fill="#8a8a96"/><rect x="104" y="24" width="2" height="2.5" fill="#8a8a96"/><rect x="104" y="29" width="2" height="2.5" fill="#8a8a96"/><rect x="104" y="34" width="2" height="2.5" fill="#8a8a96"/><rect x="104" y="39" width="2" height="2.5" fill="#8a8a96"/><rect x="104" y="44" width="2" height="2.5" fill="#8a8a96"/><rect x="104" y="49" width="2" height="2.5" fill="#8a8a96"/><rect x="104" y="54" width="2" height="2.5" fill="#8a8a96"/><rect x="104" y="59" width="2" height="2.5" fill="#8a8a96"/><rect x="108" y="9" width="2" height="2.5" fill="#8a8a96"/><rect x="108" y="14" width="2" height="2.5" fill="#8a8a96"/><rect x="108" y="19" width="2" height="2.5" fill="#8a8a96"/><rect x="108" y="24" width="2" height="2.5" fill="#8a8a96"/><rect x="108" y="29" width="2" height="2.5" fill="#8a8a96"/><rect x="108" y="34" width="2" height="2.5" fill="#8a8a96"/><rect x="108" y="39" width="2" height="2.5" fill="#8a8a96"/><rect x="108" y="44" width="2" height="2.5" fill="#8a8a96"/><rect x="108" y="49" width="2" height="2.5" fill="#8a8a96"/><rect x="108" y="54" width="2" height="2.5" fill="#8a8a96"/><rect x="108" y="59" width="2" height="2.5" fill="#8a8a96"/>
<rect x="120" y="4" width="25" height="20" fill="#9a8e8e"/><rect x="121" y="6" width="2" height="2.5" fill="#d8d0d0"/><rect x="121" y="11" width="2" height="2.5" fill="#d8d0d0"/><rect x="121" y="16" width="2" height="2.5" fill="#d8d0d0"/><rect x="125" y="6" width="2" height="2.5" fill="#d8d0d0"/><rect x="125" y="11" width="2" height="2.5" fill="#d8d0d0"/><rect x="125" y="16" width="2" height="2.5" fill="#d8d0d0"/><rect x="129" y="6" width="2" height="2.5" fill="#d8d0d0"/><rect x="129" y="11" width="2" height="2.5" fill="#d8d0d0"/><rect x="129" y="16" width="2" height="2.5" fill="#d8d0d0"/><rect x="133" y="6" width="2" height="2.5" fill="#d8d0d0"/><rect x="133" y="11" width="2" height="2.5" fill="#d8d0d0"/><rect x="133" y="16" width="2" height="2.5" fill="#d8d0d0"/><rect x="137" y="6" width="2" height="2.5" fill="#d8d0d0"/><rect x="137" y="11" width="2" height="2.5" fill="#d8d0d0"/><rect x="137" y="16" width="2" height="2.5" fill="#d8d0d0"/><rect x="141" y="6" width="2" height="2.5" fill="#d8d0d0"/><rect x="141" y="11" width="2" height="2.5" fill="#d8d0d0"/><rect x="141" y="16" width="2" height="2.5" fill="#d8d0d0"/>
<rect x="106" y="21" width="39" height="55" fill="#7a4236"/><rect x="108" y="24.0" width="2" height="2.8" fill="#c4968a"/><rect x="108" y="29.5" width="2" height="2.8" fill="#c4968a"/><rect x="108" y="35.0" width="2" height="2.8" fill="#c4968a"/><rect x="108" y="40.5" width="2" height="2.8" fill="#c4968a"/><rect x="108" y="46.0" width="2" height="2.8" fill="#c4968a"/><rect x="108" y="51.5" width="2" height="2.8" fill="#c4968a"/><rect x="108" y="57.0" width="2" height="2.8" fill="#c4968a"/><rect x="108" y="62.5" width="2" height="2.8" fill="#c4968a"/><rect x="108" y="68.0" width="2" height="2.8" fill="#c4968a"/><rect x="112" y="24.0" width="2" height="2.8" fill="#c4968a"/><rect x="112" y="29.5" width="2" height="2.8" fill="#c4968a"/><rect x="112" y="35.0" width="2" height="2.8" fill="#c4968a"/><rect x="112" y="40.5" width="2" height="2.8" fill="#c4968a"/><rect x="112" y="46.0" width="2" height="2.8" fill="#c4968a"/><rect x="112" y="51.5" width="2" height="2.8" fill="#c4968a"/><rect x="112" y="57.0" width="2" height="2.8" fill="#c4968a"/><rect x="112" y="62.5" width="2" height="2.8" fill="#c4968a"/><rect x="112" y="68.0" width="2" height="2.8" fill="#c4968a"/><rect x="116" y="24.0" width="2" height="2.8" fill="#c4968a"/><rect x="116" y="29.5" width="2" height="2.8" fill="#c4968a"/><rect x="116" y="35.0" width="2" height="2.8" fill="#c4968a"/><rect x="116" y="40.5" width="2" height="2.8" fill="#c4968a"/><rect x="116" y="46.0" width="2" height="2.8" fill="#c4968a"/><rect x="116" y="51.5" width="2" height="2.8" fill="#c4968a"/><rect x="116" y="57.0" width="2" height="2.8" fill="#c4968a"/><rect x="116" y="62.5" width="2" height="2.8" fill="#c4968a"/><rect x="116" y="68.0" width="2" height="2.8" fill="#c4968a"/><rect x="120" y="24.0" width="2" height="2.8" fill="#c4968a"/><rect x="120" y="29.5" width="2" height="2.8" fill="#c4968a"/><rect x="120" y="35.0" width="2" height="2.8" fill="#c4968a"/><rect x="120" y="40.5" width="2" height="2.8" fill="#c4968a"/><rect x="120" y="46.0" width="2" height="2.8" fill="#c4968a"/><rect x="120" y="51.5" width="2" height="2.8" fill="#c4968a"/><rect x="120" y="57.0" width="2" height="2.8" fill="#c4968a"/><rect x="120" y="62.5" width="2" height="2.8" fill="#c4968a"/><rect x="120" y="68.0" width="2" height="2.8" fill="#c4968a"/><rect x="124" y="24.0" width="2" height="2.8" fill="#c4968a"/><rect x="124" y="29.5" width="2" height="2.8" fill="#c4968a"/><rect x="124" y="35.0" width="2" height="2.8" fill="#c4968a"/><rect x="124" y="40.5" width="2" height="2.8" fill="#c4968a"/><rect x="124" y="46.0" width="2" height="2.8" fill="#c4968a"/><rect x="124" y="51.5" width="2" height="2.8" fill="#c4968a"/><rect x="124" y="57.0" width="2" height="2.8" fill="#c4968a"/><rect x="124" y="62.5" width="2" height="2.8" fill="#c4968a"/><rect x="124" y="68.0" width="2" height="2.8" fill="#c4968a"/><rect x="128" y="24.0" width="2" height="2.8" fill="#c4968a"/><rect x="128" y="29.5" width="2" height="2.8" fill="#c4968a"/><rect x="128" y="35.0" width="2" height="2.8" fill="#c4968a"/><rect x="128" y="40.5" width="2" height="2.8" fill="#c4968a"/><rect x="128" y="46.0" width="2" height="2.8" fill="#c4968a"/><rect x="128" y="51.5" width="2" height="2.8" fill="#c4968a"/><rect x="128" y="57.0" width="2" height="2.8" fill="#c4968a"/><rect x="128" y="62.5" width="2" height="2.8" fill="#c4968a"/><rect x="128" y="68.0" width="2" height="2.8" fill="#c4968a"/><rect x="132" y="24.0" width="2" height="2.8" fill="#c4968a"/><rect x="132" y="29.5" width="2" height="2.8" fill="#c4968a"/><rect x="132" y="35.0" width="2" height="2.8" fill="#c4968a"/><rect x="132" y="40.5" width="2" height="2.8" fill="#c4968a"/><rect x="132" y="46.0" width="2" height="2.8" fill="#c4968a"/><rect x="132" y="51.5" width="2" height="2.8" fill="#c4968a"/><rect x="132" y="57.0" width="2" height="2.8" fill="#c4968a"/><rect x="132" y="62.5" width="2" height="2.8" fill="#c4968a"/><rect x="132" y="68.0" width="2" height="2.8" fill="#c4968a"/><rect x="136" y="24.0" width="2" height="2.8" fill="#c4968a"/><rect x="136" y="29.5" width="2" height="2.8" fill="#c4968a"/><rect x="136" y="35.0" width="2" height="2.8" fill="#c4968a"/><rect x="136" y="40.5" width="2" height="2.8" fill="#c4968a"/><rect x="136" y="46.0" width="2" height="2.8" fill="#c4968a"/><rect x="136" y="51.5" width="2" height="2.8" fill="#c4968a"/><rect x="136" y="57.0" width="2" height="2.8" fill="#c4968a"/><rect x="136" y="62.5" width="2" height="2.8" fill="#c4968a"/><rect x="136" y="68.0" width="2" height="2.8" fill="#c4968a"/><rect x="140" y="24.0" width="2" height="2.8" fill="#c4968a"/><rect x="140" y="29.5" width="2" height="2.8" fill="#c4968a"/><rect x="140" y="35.0" width="2" height="2.8" fill="#c4968a"/><rect x="140" y="40.5" width="2" height="2.8" fill="#c4968a"/><rect x="140" y="46.0" width="2" height="2.8" fill="#c4968a"/><rect x="140" y="51.5" width="2" height="2.8" fill="#c4968a"/><rect x="140" y="57.0" width="2" height="2.8" fill="#c4968a"/><rect x="140" y="62.5" width="2" height="2.8" fill="#c4968a"/><rect x="140" y="68.0" width="2" height="2.8" fill="#c4968a"/>
<rect x="94" y="36" width="12" height="30" fill="#c8c8d0"/><rect x="95" y="38" width="2.5" height="2.5" fill="#505060"/><rect x="95" y="43" width="2.5" height="2.5" fill="#505060"/><rect x="95" y="48" width="2.5" height="2.5" fill="#505060"/><rect x="95" y="53" width="2.5" height="2.5" fill="#505060"/><rect x="95" y="58" width="2.5" height="2.5" fill="#505060"/><rect x="100" y="38" width="2.5" height="2.5" fill="#505060"/><rect x="100" y="43" width="2.5" height="2.5" fill="#505060"/><rect x="100" y="48" width="2.5" height="2.5" fill="#505060"/><rect x="100" y="53" width="2.5" height="2.5" fill="#505060"/><rect x="100" y="58" width="2.5" height="2.5" fill="#505060"/>
</g>
<rect x="0" y="7" width="76" height="15" fill="#4c2f82"/>
<text x="12" y="19.5" font-family="Liberation Sans" font-size="12.5" fill="#f0d49a" textLength="54" lengthAdjust="spacingAndGlyphs" letter-spacing="2">ТЬ'И Я</text>
<rect x="0" y="22" width="93" height="51" fill="#fdb713"/>
<text x="3" y="43.5" font-family="Liberation Sans" font-weight="bold" font-size="18" fill="#f06a1c" textLength="75" lengthAdjust="spacingAndGlyphs">ОСЕННИЕ</text>
<text x="3" y="62.5" font-family="Liberation Sans" font-weight="bold" font-size="17.5" fill="#43275a" textLength="58" lengthAdjust="spacingAndGlyphs">СКИДКИ</text>
<text x="64" y="66" font-family="Liberation Sans" font-weight="bold" font-size="22" fill="#43275a" textLength="25" lengthAdjust="spacingAndGlyphs">5%</text>
<text x="52" y="69" font-family="Liberation Sans" font-size="6" fill="#f06a1c">до</text>
<rect x="0" y="73" width="145" height="12" fill="#8a8a70"/>
<g filter="url(#adb)"><ellipse cx="14" cy="79" rx="14" ry="5" fill="#b8b090"/><ellipse cx="45" cy="80" rx="12" ry="4" fill="#c8c0a8"/><ellipse cx="78" cy="80" rx="10" ry="5" fill="#9a8a60"/><ellipse cx="120" cy="78" rx="24" ry="6" fill="#8a8a80"/><circle cx="21" cy="71" r="5" fill="#e8501a"/><circle cx="97" cy="68" r="5" fill="#f07820"/><circle cx="138" cy="16" r="6" fill="#e8501a"/></g>
<rect x="115" y="64" width="24" height="16" rx="8" fill="#1e1a1a"/><text x="119" y="76" font-family="Liberation Sans" font-size="10" fill="#fff">18+</text>
</g></svg>
<div class="a" style="left:150px;top:649px;width:145px;font:bold 11.5px/15px 'Liberation Sans';color:#2a5885">Жилой комплекс "Ты и я"</div>
<div class="a" style="left:150px;top:680px;font-size:12px;line-height:16px;color:#939393">you-me.ru</div>
<div class="a" style="left:150px;top:696px;font-size:12.5px;line-height:16px;color:#000">К</div>
<!-- FRIENDS -->
<div class="a" style="left:1195px;top:365px;width:52px;height:338px;background:#dee3ea;border-radius:4px 4px 0 0"></div>
<svg class="fr" style="top:371px" viewBox="0 0 40 40"><circle cx="20" cy="20" r="19.5" fill="#d5dbe3"/><path d="M5.5 10.5C5.5 6.5 11 5.5 15.5 9.5L24.5 9.5C29 5.5 35 6.5 35 10.5 35 14 32 16 30 16.5L27 30.5C26 34 23 35.5 20 35.5 17 35.5 14.5 33.5 13.5 30.5L10.5 16.5C8 16 5.5 14 5.5 10.5Z" fill="#fff"/><circle cx="19.3" cy="29.8" r="2.8" fill="#ccd2da"/><path d="M14.3 17.3l2.5 2.5M16.8 17.3l-2.5 2.5M22.3 17.3l2.5 2.5M24.8 17.3l-2.5 2.5" stroke="#bcc3cc" stroke-width="1.1"/><path d="M25.5 12.5l.8-1.5" stroke="#c8ced6" stroke-width="0.9"/></svg>
<svg class="fr" style="top:423px" viewBox="0 0 40 40"><defs><clipPath id="f2"><circle cx="20" cy="20" r="20"/></clipPath><filter id="bf2"><feGaussianBlur stdDeviation="0.5"/></filter></defs><g clip-path="url(#f2)" filter="url(#bf2)"><rect width="40" height="40" fill="#d8d4cc"/><rect x="0" y="0" width="40" height="10" fill="#8a9088"/><rect x="0" y="8" width="6" height="20" fill="#6a7068"/><rect x="34" y="8" width="6" height="22" fill="#5a7a5a"/><circle cx="14" cy="13" r="4.5" fill="#e8c0a8"/><path d="M8.5 12c0-5 11-5 11 0-2-3-9-3-11 0z" fill="#6a3a28"/><path d="M9 9c2-2 8-2 10 0" stroke="#f4f0f0" stroke-width="1.5" fill="none"/><circle cx="26" cy="10.5" r="4.5" fill="#dcb49a"/><path d="M21 9c1-5 9-5 10 0-3-2-7-2-10 0z" fill="#3a2a20"/><path d="M4 40c0-12 3-20 10-20s8 8 8 20z" fill="#f4eee8"/><path d="M19 40c0-14 2-24 7-24s10 6 10 24z" fill="#ece6dc"/><ellipse cx="17" cy="28" rx="7" ry="6" fill="#f2eab0"/><circle cx="14" cy="27" r="2" fill="#e8e0a0"/><circle cx="20" cy="29" r="2" fill="#e0d890"/></g></svg>
<svg class="fr" style="top:475px" viewBox="0 0 40 40"><defs><clipPath id="f3"><circle cx="20" cy="20" r="20"/></clipPath><radialGradient id="ey"><stop offset="0" stop-color="#fff"/><stop offset="0.5" stop-color="#eee"/><stop offset="1" stop-color="#fff" stop-opacity="0"/></radialGradient><filter id="bf3"><feGaussianBlur stdDeviation="0.35"/></filter></defs><g clip-path="url(#f3)"><rect width="40" height="40" fill="#070707"/><g filter="url(#bf3)"><circle cx="13" cy="13.5" r="3.2" fill="url(#ey)"/><circle cx="26" cy="12.5" r="3.2" fill="url(#ey)"/><path d="M3 16c4 8 10 12 17 12s12-5 16-13c-4 6-9 8-16 8S7 21 3 16z" fill="#d8d8d8"/><path d="M10 22l2 6 2-5 2 6 2-5 2 7 2-6 2 5 2-6 2 4 2-5" stroke="#111" stroke-width="0.9" fill="none"/><path d="M18 28v4" stroke="#888" stroke-width="0.6"/></g></g></svg>
<svg class="fr" style="top:527px" viewBox="0 0 40 40"><defs><clipPath id="f4"><circle cx="20" cy="20" r="20"/></clipPath><filter id="bf4"><feGaussianBlur stdDeviation="1"/></filter></defs><g clip-path="url(#f4)"><rect width="40" height="40" fill="#1e1812"/><g filter="url(#bf4)"><ellipse cx="22" cy="8" rx="10" ry="6" fill="#d8d0c0"/><path d="M2 16c8-4 26-6 36 0v4C28 16 12 16 2 20z" fill="#4a4036"/><ellipse cx="10" cy="22" rx="6" ry="4" fill="#a89888"/><ellipse cx="26" cy="24" rx="7" ry="5" fill="#8a7a6a"/><ellipse cx="22" cy="32" rx="5" ry="4" fill="#c8b8a8"/><ellipse cx="8" cy="32" rx="4" ry="5" fill="#2a2018"/></g></g></svg>
<svg class="fr" style="top:579px" viewBox="0 0 40 40"><defs><clipPath id="f5"><circle cx="20" cy="20" r="20"/></clipPath><filter id="bf5"><feGaussianBlur stdDeviation="0.9"/></filter></defs><g clip-path="url(#f5)"><rect width="40" height="40" fill="#7e4e2a"/><g filter="url(#bf5)"><rect x="26" y="0" width="14" height="40" fill="#b07a34"/><rect x="0" y="4" width="12" height="24" fill="#7a3020"/><circle cx="18" cy="7" r="4.5" fill="#7a7a4a"/><circle cx="17" cy="12" r="3.5" fill="#b88a6a"/><path d="M10 40c0-12 3-24 10-24s10 10 10 24z" fill="#4a5430"/><path d="M22 16l8 4v20h-6z" fill="#2a2a22"/><ellipse cx="14" cy="30" rx="5" ry="4" fill="#8a9a5a"/><ellipse cx="22" cy="22" rx="4" ry="3" fill="#9aa060"/><path d="M6 22h10" stroke="#d09070" stroke-width="3.5"/><path d="M18 18l20 17" stroke="#2a2a2a" stroke-width="2.2"/></g></g></svg>
<svg class="fr" style="top:631px" viewBox="0 0 40 40"><defs><clipPath id="f6"><circle cx="20" cy="20" r="20"/></clipPath><linearGradient id="g6" x1="0" y1="0" x2="0" y2="1"><stop offset="0" stop-color="#9ab8d4"/><stop offset="0.6" stop-color="#ccd4dc"/><stop offset="1" stop-color="#d8dee4"/></linearGradient><linearGradient id="fd6" x1="0" y1="0" x2="0" y2="1"><stop offset="0" stop-color="#dee3ea" stop-opacity="0"/><stop offset="1" stop-color="#dee3ea"/></linearGradient><filter id="bf6"><feGaussianBlur stdDeviation="0.6"/></filter></defs><g clip-path="url(#f6)"><rect width="40" height="40" fill="url(#g6)"/><g filter="url(#bf6)"><path d="M19.5 2h2.5v14h-2.5z" fill="#e8eef4"/><path d="M20 2l6 1.5-6 2.5z" fill="#2a3a5a"/><path d="M13 25c0-6 3-9 6-10 4 1 7 4 7 10z" fill="#1e2228"/><path d="M14 18c1-2 3-2 3 0v6h-3z" fill="#2a2e34"/><path d="M0 25c6-1 10 0 14-1 2 0 24 0 26 1v6H0z" fill="#8a9098"/></g><rect x="0" y="24" width="40" height="16" fill="url(#fd6)"/><rect x="0" y="34" width="40" height="6" fill="#dee3ea"/></g></svg>
<div class="a" style="left:1209px;top:676px;font-size:12px;line-height:14px;color:#8a97a8">12</div>
<svg class="a" style="left:1224px;top:677px" width="11" height="11" viewBox="0 0 11 11"><circle cx="5.5" cy="3" r="2.6" fill="#99a9bc"/><path d="M0.5 11c0-3 2-4.5 5-4.5s5 1.5 5 4.5z" fill="#99a9bc"/></svg>
<!-- download bar -->
<div class="a" style="left:1px;top:703px;width:1276px;height:1px;background:#c6c6c6"></div>
<div class="a" style="left:1px;top:704px;width:1276px;height:48px;background:#fff"></div>
<svg class="a" style="left:24px;top:721px" width="16" height="14" viewBox="0 0 16 14"><rect x="0.5" y="0.5" width="15" height="13" fill="#f4f4f4" stroke="#8d9399"/><rect x="2" y="2" width="12" height="10" fill="#4a8ab0"/><path d="M2 8c3-2 7-2 12 1v3H2z" fill="#2f5f3a"/><rect x="2" y="2" width="12" height="4" fill="#9fc8e0"/></svg>
<div class="a" style="left:53px;top:723px;font-size:13px;line-height:16px;color:#333;letter-spacing:0.3px">pirogova-24.jpg</div>
<svg class="a" style="left:205px;top:724px" width="12" height="8" viewBox="0 0 12 8"><path d="M1 6.5l5-5 5 5" stroke="#8c8c8c" stroke-width="1.6" fill="none"/></svg>
<div class="a" style="left:234px;top:710px;width:1px;height:36px;background:#dadce0"></div>
<svg class="a" style="left:252px;top:721px" width="16" height="14" viewBox="0 0 16 14"><rect x="0.5" y="0.5" width="15" height="13" fill="#f4f4f4" stroke="#8d9399"/><rect x="2" y="2" width="12" height="10" fill="#4a8ab0"/><path d="M2 8c3-2 7-2 12 1v3H2z" fill="#2f5f3a"/><rect x="2" y="2" width="12" height="4" fill="#9fc8e0"/></svg>
<div class="a" style="left:280px;top:723px;font-size:13px;line-height:16px;color:#333;letter-spacing:0.3px">pirogova-21.jpg</div>
<svg class="a" style="left:432px;top:724px" width="12" height="8" viewBox="0 0 12 8"><path d="M1 6.5l5-5 5 5" stroke="#8c8c8c" stroke-width="1.6" fill="none"/></svg>
<div class="a" style="left:461px;top:710px;width:1px;height:36px;background:#dadce0"></div>
<div class="a" style="left:1133px;top:711px;width:104px;height:32px;border:1px solid #bdbdbd;border-radius:4px;background:#fff"></div>
<div class="a" style="left:1150px;top:719px;font-size:12px;line-height:16px;color:#3c4043">Показать все</div>
<svg class="a" style="left:1250px;top:721px" width="12" height="12" viewBox="0 0 12 12"><path d="M1.5 1.5l9 9M10.5 1.5l-9 9" stroke="#777" stroke-width="2"/></svg>
<div class="a" style="left:1px;top:43px;width:3px;height:711px;background:#e3e5e8"></div>
<div class="a" style="left:1274px;top:43px;width:3px;height:711px;background:#e3e5e8"></div>
<div class="a" style="left:1px;top:752px;width:1276px;height:2px;background:#e3e5e8"></div>
<div class="a" style="left:0;top:754px;width:1278px;height:1px;background:#333a40"></div>
<!-- taskbar -->
<div class="a" style="left:0;top:755px;width:1280px;height:45px;background:#f0f0f0"></div>
<div class="a" style="left:0;top:755px;width:1280px;height:1px;background:#fafafa"></div>
<div class="a" style="left:2px;top:760px;width:51px;height:37px;background:#e8e8e8;border:1px solid;border-color:#fff #777 #777 #fff;box-shadow:inset -1px -1px 0 #b0b0b0"></div>
<svg class="a" style="left:5px;top:769px" width="17" height="17" viewBox="0 0 17 17"><path d="M1 3c2-1 4-1 7 0v5.5C5 7.5 3 7.5 1 8.5z" fill="#f25022"/><path d="M9 3c2.5 1 4.5 1 7 0v5.5c-2.5 1-4.5 1-7 0z" fill="#7fba00"/><path d="M1 9.5c2-1 4-1 7 0V15c-3-1-5-1-7 0z" fill="#00a4ef"/><path d="M9 9.5c2.5 1 4.5 1 7 0V15c-2.5 1-4.5 1-7 0z" fill="#ffb900"/></svg>
<div class="a" style="left:21px;top:771px;font:bold 12px/14px 'Liberation Sans';color:#000;letter-spacing:-0.3px">Пуск</div>
<div class="a" style="left:62px;top:760px;width:48px;height:37px;background:#e8e8e8;border:1px solid;border-color:#fff #777 #777 #fff"></div>
<div class="a" style="left:102px;top:761px;width:1px;height:35px;background:#888"></div>
<div class="a" style="left:105px;top:761px;width:1px;height:35px;background:#888"></div>
<svg class="a" style="left:66px;top:764px" width="34" height="30" viewBox="0 0 34 30"><path d="M2 6h10l2 2h16v18H2z" fill="#e8c96a"/><rect x="5" y="4" width="4" height="3" fill="#2e9c4a"/><rect x="12" y="5" width="4" height="3" fill="#d04a2a"/><path d="M2 10h28v16H2z" fill="#f6dc8a"/><path d="M8 18h16l1 10H7z" fill="#7ab8e0"/><rect x="11" y="22" width="10" height="4" fill="#cfe6f4"/></svg>
<div class="a" style="left:115px;top:760px;width:42px;height:37px;background:#f0f0f0"></div>
<svg class="a" style="left:119px;top:763px" width="32" height="30" viewBox="0 0 32 30"><defs><linearGradient id="xlg" x1="0" y1="0" x2="1" y2="1"><stop offset="0" stop-color="#e8f4e4"/><stop offset="1" stop-color="#b8dcb0"/></linearGradient></defs><rect x="1.5" y="1.5" width="28" height="26" rx="2" fill="url(#xlg)" stroke="#2f8a3a" stroke-width="1.5"/><path d="M5 4h6l4 6 4-6h6l-7 10 7 10h-6l-4-6-4 6H5l7-10z" fill="#3c9a3c"/><path d="M14 16l15 4v8H10z" fill="#fff" opacity=".9"/><path d="M14 20l14 3M13 23l15 3" stroke="#8ac08a" stroke-width="0.8"/></svg>
<svg class="a" style="left:169px;top:763px" width="32" height="30" viewBox="0 0 32 30"><defs><linearGradient id="wdg" x1="0" y1="0" x2="1" y2="1"><stop offset="0" stop-color="#f4f8ff"/><stop offset="1" stop-color="#c8d8f0"/></linearGradient></defs><rect x="1.5" y="1.5" width="28" height="26" rx="2" fill="url(#wdg)" stroke="#2a5ab0" stroke-width="1.5"/><path d="M4 6h5l2.5 10L14 6h4l2.5 10L23 6h5l-5 16h-4.5L16 13l-2.5 9H9z" fill="#1e5cc8"/><path d="M12 19l17 5v4H8z" fill="#fff" opacity=".9"/></svg>
<div class="a" style="left:212px;top:760px;width:47px;height:38px;background:#fdfdfd;border:1px solid;border-color:#777 #fff #fff #777;box-shadow:inset 1px 1px 0 #b0b0b0"></div>
<svg class="a" style="left:220px;top:763px" width="31" height="31" viewBox="0 0 32 32"><circle cx="16" cy="16" r="15" fill="#db4437"/><path d="M16 16L3 23.5A15 15 0 0 0 16 31z" fill="#0f9d58"/><path d="M3 8.5L16 16 3 23.5A15 15 0 0 1 3 8.5z" fill="#0f9d58"/><path d="M16 16l13-7.5A15 15 0 0 1 16 31z" fill="#ffcd40"/><circle cx="16" cy="16" r="7" fill="#fff"/><circle cx="16" cy="16" r="5.6" fill="#4285f4"/></svg>
<div class="a" style="left:262px;top:760px;width:48px;height:37px;background:#e8e8e8;border:1px solid;border-color:#fff #777 #777 #fff"></div>
<svg class="a" style="left:268px;top:764px" width="36" height="30" viewBox="0 0 36 30"><path d="M6 26L14 3l20 5-8 20z" fill="#8cc8e8" stroke="#5a8aa8"/><path d="M14 3l20 5" stroke="#3a5a7a" stroke-width="2.5"/><path d="M8 22l18 5" stroke="#b8dcf0" stroke-width="1"/></svg>
<div class="a" style="left:1122px;top:770px;font-size:11px;line-height:14px;color:#000">RU</div>
<div class="a" style="left:1142px;top:766px;width:1px;height:24px;background:#a0a0a0"></div>
<div class="a" style="left:1143px;top:766px;width:1px;height:24px;background:#fff"></div>
<div class="a" style="left:1146px;top:760px;width:134px;height:38px;border:1px solid;border-color:#a0a0a0 #fff #fff #a0a0a0;background:#f0f0f0"></div>
<svg class="a" style="left:1152px;top:771px" width="8" height="10" viewBox="0 0 8 10"><path d="M1 4.5l3-3 3 3M1 8.5l3-3 3 3" stroke="#000" stroke-width="1.5" fill="none"/></svg>
<svg class="a" style="left:1168px;top:770px" width="18" height="16" viewBox="0 0 18 16"><path d="M1 5h3l4-4v14l-4-4H1z" fill="#f0f0f0" stroke="#9a9a9a"/><path d="M10.5 5a3 3 0 0 1 0 6M12.5 3a6 6 0 0 1 0 10" stroke="#9a9a9a" fill="none"/></svg>
<div class="a" style="left:1215px;top:765px;font-size:11px;line-height:14px;color:#000">4:12</div>
<div class="a" style="left:1199px;top:781px;font-size:11px;line-height:14px;color:#000">18.11.2018</div>
<svg class="a" style="left:1260px;top:774px" width="17" height="13" viewBox="0 0 17 13"><rect x="0.5" y="0.5" width="16" height="12" fill="#2a6ac0" stroke="#a0b8d0"/><rect x="1" y="1" width="15" height="5" fill="#5a9ae0"/><rect x="1" y="10" width="15" height="2" fill="#1a2a4a"/></svg>
</body></html>
